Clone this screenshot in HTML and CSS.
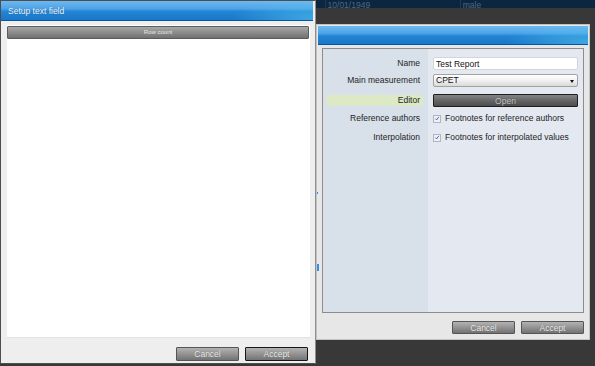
FILE: index.html
```html
<!DOCTYPE html>
<html lang="en">
<head>
  <meta charset="UTF-8" />
  <title>Setup text field</title>
  <link rel="stylesheet" href="styles.css">
</head>
<body>
  <div class="desktop">
    <div class="patient-strip">
      <div class="cell cell-name"></div>
      <div class="cell cell-date">10/01/1949</div>
      <div class="cell">male</div>
    </div>

    <!-- report settings (behind) -->
    <div class="dialog report-dialog">
      <div class="titlebar"></div>
      <div class="dialog-body">
        <div class="form-panel">
          <div class="label">Name</div>
          <div class="control">
            <input class="text-input" type="text" value="Test Report" />
          </div>

          <div class="label">Main measurement</div>
          <div class="control">
            <div class="select">CPET<span class="select-arrow"></span></div>
          </div>

          <div class="label is-active">Editor</div>
          <div class="control">
            <button class="btn btn-open">Open</button>
          </div>

          <div class="label">Reference authors</div>
          <div class="control check-row">
            <span class="check">
              <svg width="7" height="7" viewBox="0 0 7 7"><path d="M1.6 3.6 L3 5.2 L5.6 1.6" fill="none" stroke="#3552a6" stroke-width="1"/></svg>
            </span>
            Footnotes for reference authors
          </div>

          <div class="label">Interpolation</div>
          <div class="control check-row">
            <span class="check">
              <svg width="7" height="7" viewBox="0 0 7 7"><path d="M1.6 3.6 L3 5.2 L5.6 1.6" fill="none" stroke="#3552a6" stroke-width="1"/></svg>
            </span>
            Footnotes for interpolated values
          </div>
        </div>
      </div>
      <div class="dialog-footer">
        <button class="btn">Cancel</button>
        <button class="btn">Accept</button>
      </div>
    </div>

    <span class="stray-mark mark-small"></span>
    <span class="stray-mark mark-big"></span>

    <!-- setup text field (front) -->
    <div class="dialog setup-dialog">
      <div class="titlebar">Setup text field</div>
      <div class="dialog-body">
        <div class="list-panel">
          <div class="column-header">Row count</div>
        </div>
      </div>
      <div class="dialog-footer">
        <button class="btn">Cancel</button>
        <button class="btn btn-default">Accept</button>
      </div>
    </div>
  </div>
</body>
</html>
```

FILE: styles.css
```css
* {
  box-sizing: border-box;
}

body {
  margin: 0;
  font-family: "Liberation Sans", Arial, sans-serif;
  font-size: 8.5px;
  background: #393939;
}

.desktop {
  position: relative;
  width: 595px;
  height: 366px;
  overflow: hidden;
  background: #383838;
}

.patient-strip {
  display: flex;
  height: 8px;
  background: #0c2640;
  color: #4d6884;
}

.cell {
  width: 160px;
  height: 8px;
  padding-left: 2px;
  line-height: 10px;
  border-left: 1px solid #1c3958;
}

.cell-name {
  width: 385px;
  border-left: none;
}

/* dialogs */
.dialog {
  position: absolute;
  display: flex;
  flex-direction: column;
}

.titlebar {
  flex: none;
  color: #f2f8ff;
  padding-left: 7px;
  text-shadow: 0 0 1px rgba(0, 40, 90, 0.5);
  border-bottom: 1px solid #0a559e;
  background:
    radial-gradient(ellipse 110px 30px at 100% 100%, rgba(90, 205, 245, 0.55), rgba(90, 205, 245, 0) 75%),
    linear-gradient(to bottom, #6db8ef 0%, #4ea4e7 40%, #2385d4 55%, #1877c8 100%);
}

.dialog-body {
  flex: 1;
  display: flex;
  flex-direction: column;
}

.dialog-footer {
  flex: none;
  height: 25px;
  display: flex;
  justify-content: flex-end;
  align-items: flex-start;
  gap: 6px;
}

.btn {
  width: 63px;
  height: 13px;
  padding: 0;
  font: inherit;
  color: #ececec;
  text-shadow: 0 0 1px rgba(0, 0, 0, 0.35);
  border: 1px solid #555;
  border-radius: 1px;
  background: linear-gradient(to bottom, #b2b2b2 0%, #939393 50%, #727272 100%);
}

.btn-default {
  border-color: #161616;
}

/* back dialog */
.report-dialog {
  left: 316px;
  top: 24px;
  width: 274px;
  height: 316px;
  padding: 1px;
  border: 1px solid #c2c2c2;
  background: #e7e7e7;
}

.report-dialog .titlebar {
  height: 19px;
}

.report-dialog .dialog-body {
  padding: 3px 4px 0 4px;
}

.report-dialog .dialog-footer {
  padding: 8px 4px 0 0;
}

.form-panel {
  flex: 1;
  display: grid;
  grid-template-columns: 105px 1fr;
  grid-template-rows: 17px 20px 18px 19px 19px;
  align-content: start;
  padding-top: 8px;
  border: 1px solid #8c8c8c;
  color: #1e1e1e;
  background: linear-gradient(to right, #d8e0e9 105px, #e3e8f1 105px);
}

.label {
  align-self: start;
  height: 11px;
  margin: 1px 5px 0 4px;
  padding-right: 3px;
  line-height: 11px;
  text-align: right;
  white-space: nowrap;
}

.label.is-active {
  background: #dde8c5;
}

.control {
  align-self: start;
  padding: 0 5px;
  height: 13px;
}

.text-input {
  display: block;
  width: 100%;
  height: 13px;
  padding: 0 2px;
  font: inherit;
  color: #111;
  background: #fff;
  border: 1px solid #d2d6dc;
  border-radius: 2px;
  outline: none;
}

.select {
  position: relative;
  height: 13px;
  padding-left: 2px;
  line-height: 11px;
  color: #111;
  border: 1px solid #a2a2a2;
  border-radius: 2px;
  background: linear-gradient(to bottom, #ffffff 0%, #f0f0f0 50%, #d9d9d9 100%);
}

.select-arrow {
  position: absolute;
  right: 3px;
  top: 5px;
  border-left: 2px solid transparent;
  border-right: 2px solid transparent;
  border-top: 3px solid #111;
}

.btn-open {
  display: block;
  width: 100%;
  color: #c6c6c6;
  border-color: #1e1e1e;
  background: linear-gradient(to bottom, #838383 0%, #666 50%, #4c4c4c 100%);
}

.check-row {
  display: flex;
  align-items: center;
  gap: 4px;
  line-height: 13px;
  white-space: nowrap;
}

.check {
  width: 8px;
  height: 8px;
  display: flex;
  align-items: center;
  justify-content: center;
  border: 1px solid #aeb6c2;
  background: #eef2f8;
}

.stray-mark {
  position: absolute;
  background: #3a8ee8;
}

.mark-small {
  left: 317px;
  top: 192px;
  width: 1px;
  height: 2px;
}

.mark-big {
  left: 317px;
  top: 264px;
  width: 2px;
  height: 7px;
}

/* front dialog */
.setup-dialog {
  left: 0;
  top: 0;
  width: 316px;
  height: 364px;
  border: 1px solid #4e4e4e;
  border-right-color: #8f8f8f;
  background: #eeeeee;
}

.setup-dialog .titlebar {
  height: 20px;
  line-height: 20px;
  margin-right: 2px;
}

.setup-dialog .dialog-body {
  padding: 4px 5px 0 6px;
}

.setup-dialog .dialog-footer {
  padding: 9px 7px 0 0;
}

.setup-dialog .btn {
  height: 14px;
}

.list-panel {
  flex: 1;
  padding-top: 1px;
  background: #fff;
  border-bottom: 1px solid #e2e2e2;
}

.column-header {
  height: 13px;
  margin-right: 1px;
  font-size: 6px;
  line-height: 11px;
  text-align: center;
  color: #e6e6e6;
  border: 1px solid #5c5c5c;
  border-radius: 1px;
  background: linear-gradient(to bottom, #a8a8a8 0%, #8c8c8c 50%, #707070 100%);
}
```
